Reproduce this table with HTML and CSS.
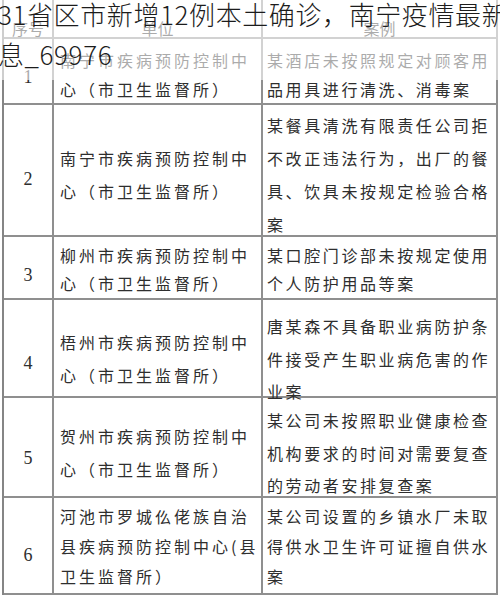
FILE: index.html
```html
<!DOCTYPE html>
<html lang="zh-CN">
<head>
<meta charset="utf-8">
<title>31省区市新增12例本土确诊，南宁疫情最新消息_69976</title>
<link rel="stylesheet" href="styles.css">
</head>
<body>
<div class="page">
  <div class="sheet">
    <div class="row head">
      <div class="c num">序号</div>
      <div class="c unit mid">单位</div>
      <div class="c case mid">案例</div>
    </div>
    <div class="row r1">
      <div class="c num">1</div>
      <div class="c unit">南宁市疾病预防控制中<br>心（市卫生监督所）</div>
      <div class="c case">某酒店未按照规定对顾客用<br>品用具进行清洗、消毒案</div>
    </div>
    <div class="row r2">
      <div class="c num">2</div>
      <div class="c unit">南宁市疾病预防控制中<br>心（市卫生监督所）</div>
      <div class="c case">某餐具清洗有限责任公司拒<br>不改正违法行为，出厂的餐<br>具、饮具未按规定检验合格<br>案</div>
    </div>
    <div class="row r3">
      <div class="c num">3</div>
      <div class="c unit">柳州市疾病预防控制中<br>心（市卫生监督所）</div>
      <div class="c case">某口腔门诊部未按规定使用<br>个人防护用品等案</div>
    </div>
    <div class="row r4">
      <div class="c num">4</div>
      <div class="c unit">梧州市疾病预防控制中<br>心（市卫生监督所）</div>
      <div class="c case">唐某森不具备职业病防护条<br>件接受产生职业病危害的作<br>业案</div>
    </div>
    <div class="row r5">
      <div class="c num">5</div>
      <div class="c unit">贺州市疾病预防控制中<br>心（市卫生监督所）</div>
      <div class="c case">某公司未按照职业健康检查<br>机构要求的时间对需要复查<br>的劳动者安排复查案</div>
    </div>
    <div class="row r6">
      <div class="c num">6</div>
      <div class="c unit">河池市罗城仫佬族自治<br>县疾病预防控制中心(县<br>卫生监督所）</div>
      <div class="c case">某公司设置的乡镇水厂未取<br>得供水卫生许可证擅自供水<br>案</div>
    </div>
  </div>
  <div class="veil">
    <h1 class="title">31省区市新增12例本土确诊，南宁疫情最新消息_69976</h1>
  </div>
</div>
</body>
</html>
```

FILE: styles.css
```css
html, body {
  margin: 0;
  padding: 0;
  background: #ffffff;
}

body {
  width: 500px;
  height: 598px;
  overflow: hidden;
}

.page {
  position: relative;
  width: 500px;
  height: 598px;
  overflow: hidden;
}

.sheet {
  margin-left: 2px;
  width: 496px;
  box-sizing: border-box;
  border-left: 2px solid #858585;
  border-right: 2px solid #8f8f8f;
  font-family: "Noto Sans CJK SC", "Noto Sans", sans-serif;
  font-weight: 400;
  font-size: 16px;
  letter-spacing: 2.6px;
  color: #2e2e2e;
}

.row {
  display: grid;
  grid-template-columns: 48px 209px 1fr;
  box-sizing: border-box;
  border-bottom: 2px solid #8f8f8f;
}

.head { height: 39px; }
.r1 { height: 66px; }
.r2 { height: 132px; }
.r3 { height: 63px; }
.r4 { height: 98px; }
.r5 { height: 100px; }
.r6 { height: 97px; }

.c {
  display: flex;
  align-items: center;
  box-sizing: border-box;
  padding-top: 4px;
  line-height: 32px;
  white-space: nowrap;
  min-width: 0;
}

.unit {
  border-left: 2px solid #8f8f8f;
  padding-left: 6px;
  letter-spacing: 3px;
}

.case {
  border-left: 2px solid #8f8f8f;
  padding-left: 4px;
}

.num {
  justify-content: center;
  font-family: "Liberation Serif", "Noto Sans CJK SC", serif;
  font-weight: 400;
  font-size: 18px;
  letter-spacing: 0;
}

.head .c {
  padding-top: 12px;
  padding-left: 0;
  justify-content: center;
  font-family: "Noto Sans CJK SC", sans-serif;
  font-weight: 400;
  font-size: 16px;
  letter-spacing: 0;
}

/* per-row line pitch and vertical placement, following the scanned sheet */
.r1 .c { padding-top: 7px; line-height: 29px; }
.r2 .c { padding-top: 4px; line-height: 33px; }
.r3 .c { padding-top: 2px; line-height: 28px; }
.r4 .c { padding-top: 10px; line-height: 32.5px; }
.r5 .c { padding-top: 6px; line-height: 32.5px; }
.r6 .c { padding-top: 0; line-height: 30px; }

.r1 .num { padding-top: 12px; }
.r2 .num { padding-top: 12px; }
.r3 .num { padding-top: 15px; }
.r4 .num { padding-top: 18px; }
.r5 .num { padding-top: 16px; }
.r6 .num { padding-top: 19px; }

.veil {
  position: absolute;
  top: 0;
  left: 0;
  width: 500px;
  height: 80px;
  background: rgba(255, 255, 255, 0.6);
  overflow: hidden;
}

.title {
  margin: -6px 0 0 -2px;
  width: 540px;
  font-family: "Noto Sans CJK SC", "Noto Sans", sans-serif;
  font-weight: 300;
  font-size: 26px;
  line-height: 40px;
  color: #1c1c1c;
  letter-spacing: 0.6px;
}
```
